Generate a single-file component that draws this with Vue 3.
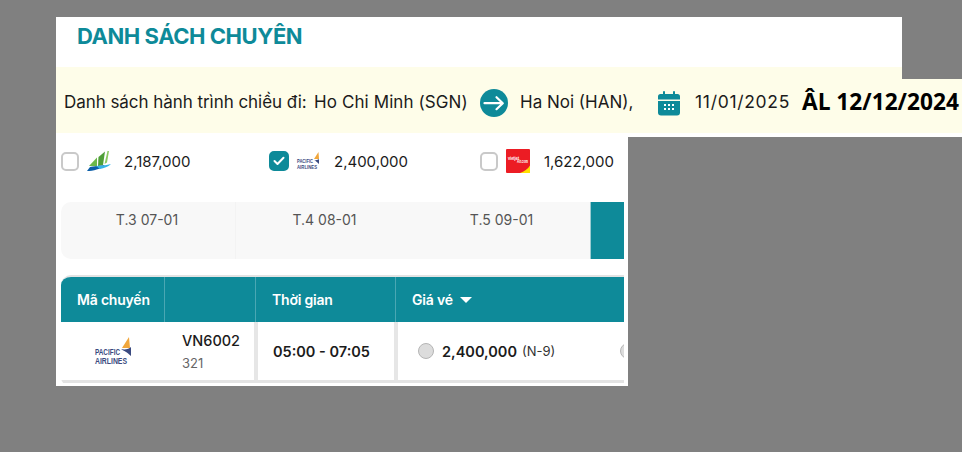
<template>
  <div class="page">
    <div class="sheet">
      <div class="title">DANH SÁCH CHUYÊN</div>

      <div class="banner">
        <div class="banner-ext"></div>
        <span class="route-label">Danh sách hành trình chiều đi:</span>
        <span class="from">Ho Chi Minh (SGN)</span>
        <svg class="arrow" width="28" height="28" viewBox="0 0 28 28">
          <circle cx="14" cy="14" r="14" fill="#0e8a99" />
          <path d="M4.500 14.200H22.500M16.500 8.200L22.800 14.200L16.500 20.200" fill="none" stroke="#fff" stroke-width="2.200" stroke-linecap="round" stroke-linejoin="round" />
        </svg>
        <span class="to">Ha Noi (HAN),</span>
        <svg class="cal" width="22" height="26" viewBox="0 0 22 26">
          <path d="M2.500 4H19.500A2.500 2.500 0 0 1 22 6.500V9.500H0V6.500A2.500 2.500 0 0 1 2.500 4Z" fill="#0e8a99" />
          <path d="M0 11H22V22.500A3 3 0 0 1 19 25.500H3A3 3 0 0 1 0 22.500Z" fill="#0e8a99" />
          <rect x="5" y="1" width="2" height="5" rx="1" fill="#0e8a99" />
          <rect x="15" y="1" width="2" height="5" rx="1" fill="#0e8a99" />
          <g fill="#fff">
            <rect x="6" y="14" width="2" height="2" />
            <rect x="10" y="14" width="2" height="2" />
            <rect x="14" y="14" width="2" height="2" />
            <rect x="6" y="18" width="2" height="2" />
            <rect x="10" y="18" width="2" height="2" />
            <rect x="14" y="18" width="2" height="2" />
          </g>
        </svg>
        <span class="date">11/01/2025</span>
        <span class="lunar">ÂL 12/12/2024</span>
      </div>
    </div>

    <div class="content">
      <div class="airlines">
        <div v-for="a in airlines" :key="a.code" class="airline" :class="a.code">
          <span class="check" :class="{ on: a.checked }">
            <svg v-if="a.checked" width="12" height="10" viewBox="0 0 12 10">
              <path d="M1.500 5L4.500 8L10.500 1.800" fill="none" stroke="#fff" stroke-width="2" stroke-linecap="round" stroke-linejoin="round" />
            </svg>
          </span>

          <svg v-if="a.code === 'bamboo'" class="logo" width="24" height="20" viewBox="0 0 24 20">
            <path d="M2 15L10 6.500V15Z" fill="#6cb84a" />
            <path d="M11 15L11.500 6L18 0.500L16 14Z" fill="#4f9f38" />
            <path d="M17.500 13L20.500 0H22L20 11.500Z" fill="#8ccb62" />
            <path d="M0 20C6 20 14 18 18 14C14 15 6 15 3 16Z" fill="#0b5ea8" />
            <path d="M9 15C14 15 20 14 24 13C21 16 17 17 13 18Z" fill="#35b4e6" />
          </svg>

          <svg v-else-if="a.code === 'pacific'" class="logo" width="24" height="20" viewBox="0 0 24 20">
            <text x="2" y="12" class="pa-text" textLength="16" lengthAdjust="spacingAndGlyphs">PACIFIC</text>
            <text x="2" y="18" class="pa-text" textLength="20" lengthAdjust="spacingAndGlyphs">AIRLINES</text>
            <path d="M19 8L23.500 1L24 8Z" fill="#f0a63c" />
            <path d="M19 9C21 9.500 23 9 24 8V13C22 11 21 10 19 9Z" fill="#3a4a80" />
          </svg>

          <svg v-else class="logo" width="24" height="24" viewBox="0 0 24 24">
            <rect width="24" height="24" rx="1" fill="#ec1c24" />
            <path d="M24 16.500V24H14C18 22.500 22 20 24 16.500Z" fill="#ffe000" />
            <text x="2" y="11" class="vj-text" textLength="11" lengthAdjust="spacingAndGlyphs">vietjet</text>
            <text x="11" y="14" class="vj-text" textLength="11" lengthAdjust="spacingAndGlyphs">Air.com</text>
          </svg>

          <span class="fare">{{ a.price }}</span>
        </div>
      </div>

      <div class="tabs">
        <div v-for="d in days" :key="d" class="tab">{{ d }}</div>
        <div class="tab-active"></div>
      </div>

      <div class="flights">
        <div class="head">
          <div class="th">Mã chuyến</div>
          <div class="th"></div>
          <div class="th">Thời gian</div>
          <div class="th last">Giá vé <i class="caret"></i></div>
        </div>
        <div class="row">
          <div class="td carrier">
            <svg width="40" height="30" viewBox="0 0 40 30">
              <text x="2" y="18" class="pa-big" textLength="25" lengthAdjust="spacingAndGlyphs">PACIFIC</text>
              <text x="2" y="27" class="pa-big" textLength="32" lengthAdjust="spacingAndGlyphs">AIRLINES</text>
              <path d="M29 11L36 0L37 11Z" fill="#f0a63c" />
              <path d="M28 12C32 13 36 12 38 10V19C34 15 31 14 28 12Z" fill="#3a4a80" />
            </svg>
          </div>
          <div class="td code">
            <div class="num">VN6002</div>
            <div class="plane">321</div>
          </div>
          <div class="td time">05:00 - 07:05</div>
          <div class="td prices">
            <span class="radio"></span>
            <span class="amount">2,400,000</span>
            <span class="cls">(N-9)</span>
            <span class="radio next"></span>
          </div>
        </div>
      </div>
    </div>
  </div>
</template>

<script setup>
const airlines = [
  { code: 'bamboo', price: '2,187,000', checked: false },
  { code: 'pacific', price: '2,400,000', checked: true },
  { code: 'vietjet', price: '1,622,000', checked: false }
]

const days = ['T.3 07-01', 'T.4 08-01', 'T.5 09-01']
</script>

<style>
html,
body {
  background: #808080;
}
</style>

<style scoped>
.page {
  height: 452px;
  padding: 17px 0 0 56px;
  box-sizing: border-box;
  background: #808080;
  font-family: Inter, "Liberation Sans", sans-serif;
  color: #1b1b1b;
  overflow: hidden;
}

.sheet {
  width: 846px;
  padding-bottom: 4px;
  background: #fff;
}

.title {
  height: 50px;
  padding: 5px 0 0 21px;
  box-sizing: border-box;
  font-size: 22px;
  line-height: 28px;
  font-weight: 700;
  letter-spacing: -0.45px;
  color: #0e8a99;
}

.banner {
  position: relative;
  display: flex;
  align-items: center;
  height: 66px;
  padding: 3px 0 0 8px;
  box-sizing: border-box;
  background: #fefde9;
  font-size: 17px;
  white-space: nowrap;
}

.banner-ext {
  position: absolute;
  left: 846px;
  top: 12px;
  width: 60px;
  height: 54px;
  background: #fefde9;
  border-bottom: 4px solid #fff;
}

.banner > span,
.banner > svg {
  position: relative;
  z-index: 1;
  flex: none;
}

.route-label {
  width: 250px;
  letter-spacing: -0.05px;
}

.from {
  width: 166px;
  letter-spacing: 0.1px;
}

.arrow {
  margin-top: 3px;
}

.to {
  width: 138px;
  margin-left: 12px;
}

.cal {
  margin-top: 3px;
  margin-right: 15px;
}

.date {
  width: 107px;
  font-size: 17.500px;
  letter-spacing: 0.7px;
}

.lunar {
  font-family: "Open Sans", "Noto Sans", sans-serif;
  font-size: 22.700px;
  font-weight: 700;
  color: #000;
}

.content {
  width: 572px;
  height: 249px;
  padding: 0 4px 0 5px;
  box-sizing: border-box;
  background: #fff;
}

.airlines {
  display: flex;
  height: 65px;
  padding-top: 14px;
  box-sizing: border-box;
}

.airline {
  display: flex;
  align-items: center;
  height: 20px;
  width: 208px;
}

.airline.pacific {
  width: 211px;
}

.airline.vietjet {
  width: 144px;
}

.check {
  display: flex;
  align-items: center;
  justify-content: center;
  flex: none;
  width: 18px;
  height: 19px;
  border: 2px solid #c9c9c9;
  border-radius: 5px;
  box-sizing: border-box;
  background: #fff;
}

.check.on {
  width: 20px;
  height: 20px;
  border-color: #0e8a99;
  background: #0e8a99;
}

.logo {
  flex: none;
  margin-left: 8px;
  margin-right: 13px;
}

.pacific .logo {
  margin-left: 6px;
  margin-right: 15px;
}

.vietjet .logo {
  margin-right: 14px;
}

.fare {
  font-size: 15px;
  white-space: nowrap;
}

.pa-text {
  font-family: "Liberation Sans", sans-serif;
  font-size: 6px;
  font-weight: 700;
  fill: #3a4a80;
}

.pa-big {
  font-family: "Liberation Sans", sans-serif;
  font-size: 9px;
  font-weight: 700;
  fill: #3a4a80;
}

.vj-text {
  font-family: "Liberation Sans", sans-serif;
  font-size: 5px;
  font-weight: 700;
  fill: #fff;
}

.tabs {
  display: flex;
  height: 57px;
  border-radius: 10px 0 0 10px;
  background: #f8f8f8;
  overflow: hidden;
}

.tab {
  width: 177px;
  padding-top: 8px;
  box-sizing: border-box;
  text-align: center;
  font-size: 14px;
  line-height: 20px;
  color: #555;
}

.tab:first-child {
  width: 175px;
  padding-right: 2px;
  border-right: 1px solid #f3f3f3;
}

.tab:last-of-type {
  width: 178px;
  padding-right: 2px;
}

.tab-active {
  flex: 1;
  border-left: 1px solid #9ccbd1;
  background: #0e8a99;
}

.flights {
  margin-top: 16px;
  height: 110px;
  border-top: 2px solid #e3e3e3;
  border-radius: 10px 0 0 10px;
  overflow: hidden;
}

.head {
  display: grid;
  grid-template-columns: 104px 91px 140px 1fr;
  height: 45px;
  background: #0e8a99;
  color: #fff;
  font-size: 14px;
  font-weight: 600;
  letter-spacing: -0.2px;
}

.th {
  display: flex;
  align-items: center;
  padding-left: 16px;
  border-right: 1px solid #4aa7b3;
}

.th.last {
  border-right: none;
}

.caret {
  display: inline-block;
  margin-left: 7px;
  border-left: 6px solid transparent;
  border-right: 6px solid transparent;
  border-top: 6px solid #fff;
}

.row {
  display: grid;
  grid-template-columns: 104px 93px 140px 1fr;
  height: 58px;
  border-bottom: 3px solid #e3e3e3;
}

.td {
  display: flex;
  align-items: center;
}

.carrier {
  justify-content: center;
  padding-top: 2px;
}

.code {
  flex-direction: column;
  align-items: flex-start;
  justify-content: center;
  padding-left: 17px;
  border-right: 4px solid #e6e6e6;
}

.num {
  font-size: 14.500px;
  line-height: 22px;
  font-weight: 500;
}

.plane {
  font-size: 13px;
  line-height: 18px;
  margin-top: 2px;
  color: #666;
}

.time {
  padding-left: 15px;
  border-right: 4px solid #e6e6e6;
  font-size: 14.500px;
  font-weight: 600;
}

.prices {
  padding-left: 20px;
  overflow: hidden;
  white-space: nowrap;
}

.radio {
  flex: none;
  width: 16px;
  height: 16px;
  border: 1px solid #b5b5b5;
  border-radius: 50%;
  box-sizing: border-box;
  background: #dcdcdc;
}

.radio.next {
  margin-left: 65px;
}

.amount {
  margin-left: 8px;
  font-size: 14.500px;
  font-weight: 600;
}

.cls {
  margin-left: 5px;
  font-size: 13px;
  color: #333;
}
</style>
